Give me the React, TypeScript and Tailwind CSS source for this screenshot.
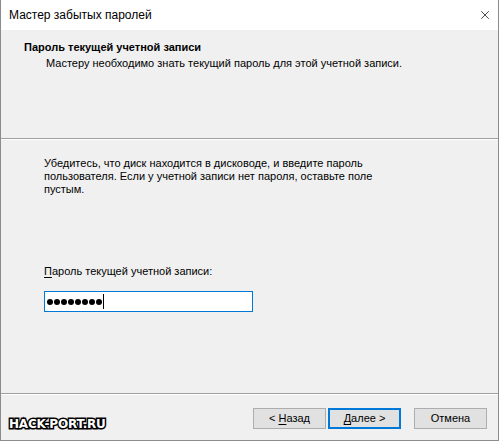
import { X } from "lucide-react";

const FONT = { fontFamily: '"Liberation Sans", Arial, sans-serif' };

function Btn({ children, primary }: { children: React.ReactNode; primary?: boolean }) {
  return (
    <button
      className={
        "flex h-[21px] w-[73px] items-center justify-center bg-[#e1e1e1] text-[11px] leading-none text-black " +
        (primary ? "border-2 border-[#0078d7]" : "border border-[#adadad]")
      }
    >
      {children}
    </button>
  );
}

export default function App() {
  return (
    <div
      className="relative flex h-[441px] w-[499px] flex-col overflow-hidden border-x border-b border-[#8c8c8c] bg-[#f0f0f0] text-black"
      style={FONT}
    >
      {/* title bar */}
      <div className="flex h-[30px] shrink-0 items-center justify-between bg-white pl-[8px] pr-[6px]">
        <span className="text-[12px]">Мастер забытых паролей</span>
        <X className="h-[14px] w-[14px]" strokeWidth={1.2} />
      </div>

      {/* header */}
      <div className="h-[108px] shrink-0 pt-[11px]">
        <div className="pl-[23px] text-[11px] font-bold leading-[13px]">Пароль текущей учетной записи</div>
        <div className="mt-[3px] pl-[45px] text-[11px] leading-[13px]">
          Мастеру необходимо знать текущий пароль для этой учетной записи.
        </div>
      </div>
      <div className="h-[2px] shrink-0 border-t border-[#a0a0a0] border-b border-b-white" />

      {/* body */}
      <div className="flex h-[253px] shrink-0 flex-col pl-[43px] pt-[17px] text-[11px] leading-[13px]">
        <p>
          Убедитесь, что диск находится в дисководе, и введите пароль
          <br />
          пользователя. Если у учетной записи нет пароля, оставьте поле
          <br />
          пустым.
        </p>
        <label className="mt-[69px]">
          <span className="underline underline-offset-2">П</span>ароль текущей учетной записи:
        </label>
        <div className="mt-[13px] flex h-[21px] w-[209px] items-center border border-[#0078d7] bg-white pl-[2px]">
          <div className="flex gap-[1px]">
            {Array.from({ length: 8 }).map((_, i) => (
              <span key={i} className="h-[6px] w-[6px] rounded-full bg-black" />
            ))}
          </div>
          <span className="ml-[1px] h-[15px] w-[1px] bg-black" />
        </div>
      </div>
      <div className="h-[2px] shrink-0 border-t border-[#a0a0a0] border-b border-b-white" />

      {/* footer */}
      <div className="flex flex-1 items-start justify-end pr-[11px] pt-[13px]">
        <div className="flex gap-[2px]">
          <Btn>
            &lt; <span className="ml-[3px] underline underline-offset-2">Н</span>азад
          </Btn>
          <Btn primary>
            <span className="underline underline-offset-2">Д</span>алее &gt;
          </Btn>
        </div>
        <div className="ml-[13px]">
          <Btn>Отмена</Btn>
        </div>
      </div>

      {/* watermark */}
      <div
        className="absolute left-[8px] top-[415px] text-[12px] font-bold tracking-[-0.2px] text-white"
        style={{
          fontFamily: '"DejaVu Sans", sans-serif',
          WebkitTextStroke: "3px #000",
          paintOrder: "stroke fill",
        }}
      >
        HACK-PORT.RU
      </div>
    </div>
  );
}
